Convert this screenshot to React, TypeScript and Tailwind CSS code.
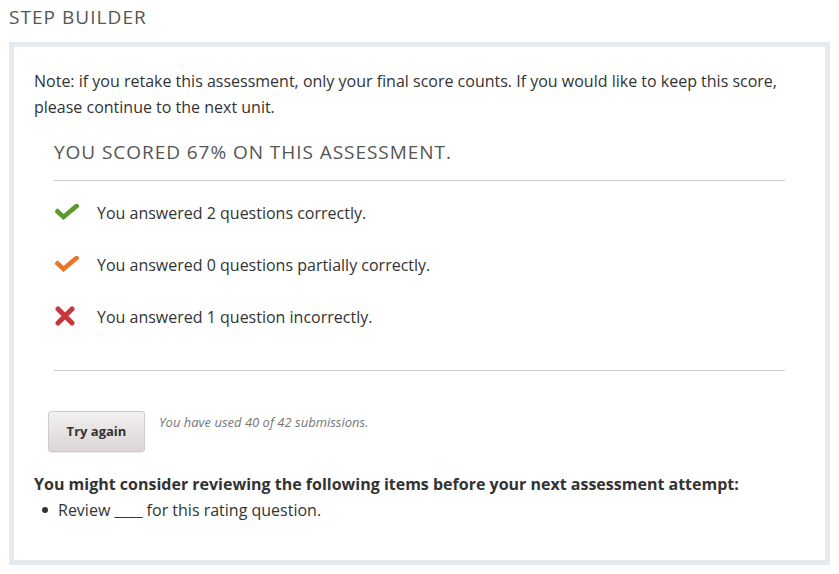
import React from "react";

function Check({ color }: { color: string }) {
  return (
    <svg width="24" height="16" viewBox="0 0 24 16" aria-hidden>
      <path
        d="M2.5 7.5 L8.5 13 L21.5 2"
        fill="none"
        stroke={color}
        strokeWidth="4.6"
        strokeLinecap="square"
        strokeLinejoin="miter"
      />
    </svg>
  );
}

function Cross() {
  return (
    <svg width="20" height="20" viewBox="0 0 20 20" aria-hidden>
      <path
        d="M3 3 L17 17 M17 3 L3 17"
        fill="none"
        stroke="#c9373d"
        strokeWidth="5"
        strokeLinecap="round"
      />
    </svg>
  );
}

const results = [
  { icon: <Check color="#5a9a2b" />, text: "You answered 2 questions correctly." },
  { icon: <Check color="#e97726" />, text: "You answered 0 questions partially correctly." },
  { icon: <Cross />, text: "You answered 1 question incorrectly." },
];

export default function App() {
  return (
    <div className="w-[839px] h-[574px] bg-white font-['Open_Sans',sans-serif] text-[#333]">
      <div className="px-[9px] pt-[4px]">
        <h2 className="text-[19px] leading-[26px] tracking-[0.055em] text-[#555] uppercase">
          Step Builder
        </h2>
        <div className="mt-[12px] w-[821px] border-[5px] border-[#e5eaef] px-5 pt-[21px] pb-[37px]">
          <p className="text-[16px] leading-[26px] text-[#333]">
            Note: if you retake this assessment, only your final score counts. If you would like
            to keep this score, please continue to the next unit.
          </p>
          <div className="mx-5 mt-[19px]">
            <h3 className="text-[19px] leading-[26px] tracking-[0.05em] text-[#555] uppercase pb-[15px] border-b border-[#ccc]">
              You scored 67% on this assessment.
            </h3>
            <ul className="pt-[21px] pb-[42px] flex flex-col gap-[30px] border-b border-[#ccc]">
              {results.map((r) => (
                <li key={r.text} className="flex items-center h-[22px]">
                  <span className="w-[43px] flex items-center justify-start pl-px -mt-[3px]">
                    {r.icon}
                  </span>
                  <span className="text-[16px] text-[#333]">{r.text}</span>
                </li>
              ))}
            </ul>
          </div>
          <div className="flex items-start mt-[40px] ml-[14px]">
            <button
              type="button"
              className="w-[97px] h-[41px] rounded-[3px] border border-[#ccc] bg-gradient-to-b from-[#f2f0f0] to-[#dcd6d6] text-[13px] font-bold text-[#333] shadow-[0_1px_1px_rgba(0,0,0,0.08)]"
            >
              Try again
            </button>
            <span className="ml-[14px] mt-[2px] text-[13px] leading-[18px] italic text-[#777]">
              You have used 40 of 42 submissions.
            </span>
          </div>
          <p className="mt-[19px] text-[16px] leading-[26px] font-bold text-[#333]">
            You might consider reviewing the following items before your next assessment attempt:
          </p>
          <ul className="ml-[8px]">
            <li className="flex items-center text-[16px] leading-[26px]">
              <span className="w-[6px] h-[6px] rounded-full bg-[#333] mr-[10px]" />
              Review ____ for this rating question.
            </li>
          </ul>
        </div>
      </div>
    </div>
  );
}
